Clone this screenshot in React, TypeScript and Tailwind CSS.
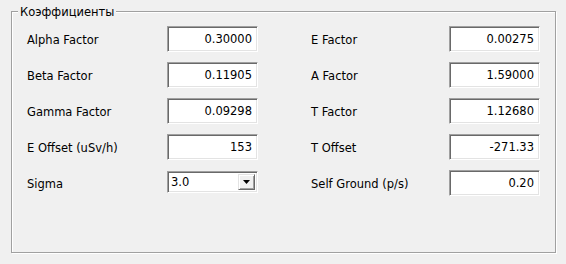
import React from "react";

interface Field {
  label: string;
  value: string;
}

const leftFields: Field[] = [
  { label: "Alpha Factor", value: "0.30000" },
  { label: "Beta Factor", value: "0.11905" },
  { label: "Gamma Factor", value: "0.09298" },
  { label: "E Offset (uSv/h)", value: "153" },
];

const rightFields: Field[] = [
  { label: "E Factor", value: "0.00275" },
  { label: "A Factor", value: "1.59000" },
  { label: "T Factor", value: "1.12680" },
  { label: "T Offset", value: "-271.33" },
  { label: "Self Ground (p/s)", value: "0.20" },
];

function TextBox({ value }: { value: string }) {
  return (
    <div className="h-[26px] w-[91px] bg-white border border-t-[#a0a0a0] border-l-[#a0a0a0] border-b-white border-r-white shadow-[inset_1px_1px_0_#696969,inset_-1px_-1px_0_#e3e3e3] flex items-center justify-end pr-[5px] text-black">
      {value}
    </div>
  );
}

function Combo({ value }: { value: string }) {
  return (
    <div className="mt-[1px] h-[22px] w-[91px] bg-white border border-t-[#a0a0a0] border-l-[#a0a0a0] border-b-white border-r-white shadow-[inset_1px_1px_0_#696969,inset_-1px_-1px_0_#e3e3e3] flex items-stretch p-[2px]">
      <div className="flex-1 flex items-center pl-[1px] text-black">{value}</div>
      <div className="w-[17px] bg-[#f0f0f0] border border-t-[#e3e3e3] border-l-[#e3e3e3] border-b-[#696969] border-r-[#696969] shadow-[inset_1px_1px_0_#fff,inset_-1px_-1px_0_#a0a0a0] flex items-center justify-center">
        <svg width="7" height="4" viewBox="0 0 7 4">
          <path d="M0 0h7L3.5 4z" fill="#000" />
        </svg>
      </div>
    </div>
  );
}

function Label({ text }: { text: string }) {
  return <div className="self-center pt-[1px] text-black">{text}</div>;
}

export default function App() {
  return (
    <div
      className="w-[566px] h-[264px] bg-[#f0f0f0] pt-[11px] pl-[11px] text-[11.5px] leading-[14px]"
      style={{ fontFamily: '"DejaVu Sans", Tahoma, sans-serif' }}
    >
      <div className="relative w-[545px] h-[242px] border border-[#a0a0a0] shadow-[1px_1px_0_#fff,inset_1px_1px_0_#fff]">
        <span className="absolute left-[6px] top-[-7px] px-[2px] bg-[#f0f0f0] text-black">
          Коэффициенты
        </span>
        <div className="pt-[14px] pl-[15px] grid grid-cols-[140px_91px_53px_138px_91px] auto-rows-[26px] gap-y-[10px]">
          {rightFields.map((rf, i) => (
            <React.Fragment key={rf.label}>
              {i < leftFields.length ? (
                <>
                  <Label text={leftFields[i].label} />
                  <TextBox value={leftFields[i].value} />
                </>
              ) : (
                <>
                  <Label text="Sigma" />
                  <Combo value="3.0" />
                </>
              )}
              <div />
              <Label text={rf.label} />
              <TextBox value={rf.value} />
            </React.Fragment>
          ))}
        </div>
      </div>
    </div>
  );
}
